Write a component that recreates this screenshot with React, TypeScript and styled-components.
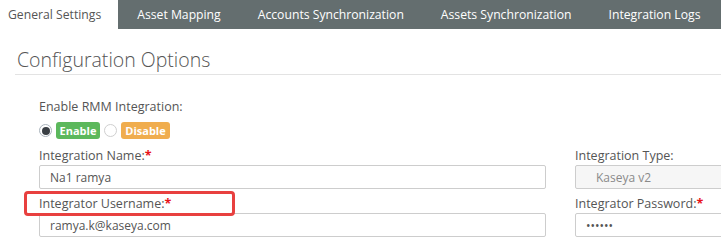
import React from "react";
import styled, { createGlobalStyle } from "styled-components";

const Global = createGlobalStyle`
  html, body { margin: 0; padding: 0; background: #fff; }
  body { font-family: "Open Sans", "Liberation Sans", sans-serif; color: #555; overflow: hidden; }
  * { box-sizing: border-box; }
`;

const Page = styled.div`
  width: 721px;
  height: 243px;
  overflow: hidden;
`;

const TabBar = styled.div`
  display: flex;
  height: 29px;
  background: #646e6f;
  width: 900px;
`;

const Tab = styled.div<{ $active?: boolean; $first?: boolean }>`
  display: flex;
  align-items: center;
  padding: ${(p) => (p.$first ? "0 17px 0 8px" : "0 18px 0 19px")};
  font-size: 12.2px;
  white-space: nowrap;
  color: ${(p) => (p.$active ? "#555" : "#fff")};
  background: ${(p) => (p.$active ? "#fff" : "transparent")};
`;

const Body = styled.div`
  padding: 0 0 0 15px;
`;

const Heading = styled.h2`
  margin: 18px 0 0 0;
  padding: 0 0 1px 2px;
  font-size: 19.5px;
  font-weight: 300;
  color: #555;
  border-bottom: 1px solid #e3e3e3;
  line-height: 26px;
`;

const Form = styled.div`
  padding: 23px 0 0 24px;
`;

const Label = styled.div`
  font-size: 12.5px;
  line-height: 17px;
  color: #555;
  position: relative;
`;

const Star = styled.span`
  color: #e8131a;
  font-weight: 700;
`;

const RadioRow = styled.div`
  display: flex;
  align-items: center;
  height: 17px;
  margin-top: 7px;
  gap: 4px;
`;

const Radio = styled.span<{ $checked?: boolean }>`
  width: 13px;
  height: 13px;
  border-radius: 50%;
  border: 1px solid ${(p) => (p.$checked ? "#a9b3bc" : "#cfcfcf")};
  background: #fff;
  display: flex;
  align-items: center;
  justify-content: center;
  &::after {
    content: "";
    display: ${(p) => (p.$checked ? "block" : "none")};
    width: 8px;
    height: 8px;
    border-radius: 50%;
    background: #3a3f44;
  }
`;

const Badge = styled.span<{ $color: string; $w: number }>`
  width: ${(p) => p.$w}px;
  height: 17px;
  border-radius: 3px;
  background: ${(p) => p.$color};
  color: #fff;
  font-weight: 700;
  font-size: 11px;
  display: flex;
  align-items: center;
  justify-content: center;
`;

const Grid = styled.div`
  display: grid;
  grid-template-columns: 507px 507px;
  column-gap: 29px;
  margin-top: 8px;
`;

const Field = styled.div`
  display: flex;
  flex-direction: column;
  gap: 1px;
  margin-bottom: 6px;
`;

const Input = styled.div<{ $disabled?: boolean; $indent?: number }>`
  height: 24px;
  border: 1px solid #cdcdcd;
  border-radius: 2px;
  background: ${(p) => (p.$disabled ? "#f6f6f6" : "#fff")};
  color: ${(p) => (p.$disabled ? "#8a8a8a" : "#555")};
  font-size: 12px;
  display: flex;
  align-items: center;
  padding-left: ${(p) => p.$indent ?? 10}px;
`;

const Highlight = styled.div`
  position: absolute;
  left: -15px;
  top: -4px;
  width: 211px;
  height: 25px;
  border: 3px solid #e8403f;
  border-radius: 4px;
  pointer-events: none;
`;

export default function App() {
  return (
    <Page>
      <Global />
      <TabBar>
        <Tab $active $first>General Settings</Tab>
        <Tab>Asset Mapping</Tab>
        <Tab>Accounts Synchronization</Tab>
        <Tab>Assets Synchronization</Tab>
        <Tab>Integration Logs</Tab>
      </TabBar>
      <Body>
        <Heading>Configuration Options</Heading>
        <Form>
          <Label>Enable RMM Integration:</Label>
          <RadioRow>
            <Radio $checked />
            <Badge $color="#5cb85c" $w={44}>Enable</Badge>
            <Radio />
            <Badge $color="#f0ad4e" $w={49}>Disable</Badge>
          </RadioRow>
          <Grid>
            <Field>
              <Label>
                Integration Name:<Star>*</Star>
              </Label>
              <Input>Na1 ramya</Input>
            </Field>
            <Field>
              <Label>Integration Type:</Label>
              <Input $disabled $indent={20}>Kaseya v2</Input>
            </Field>
            <Field>
              <Label>
                Integrator Username:<Star>*</Star>
                <Highlight />
              </Label>
              <Input>ramya.k@kaseya.com</Input>
            </Field>
            <Field>
              <Label>
                Integrator Password:<Star>*</Star>
              </Label>
              <Input>••••••</Input>
            </Field>
          </Grid>
        </Form>
      </Body>
    </Page>
  );
}
